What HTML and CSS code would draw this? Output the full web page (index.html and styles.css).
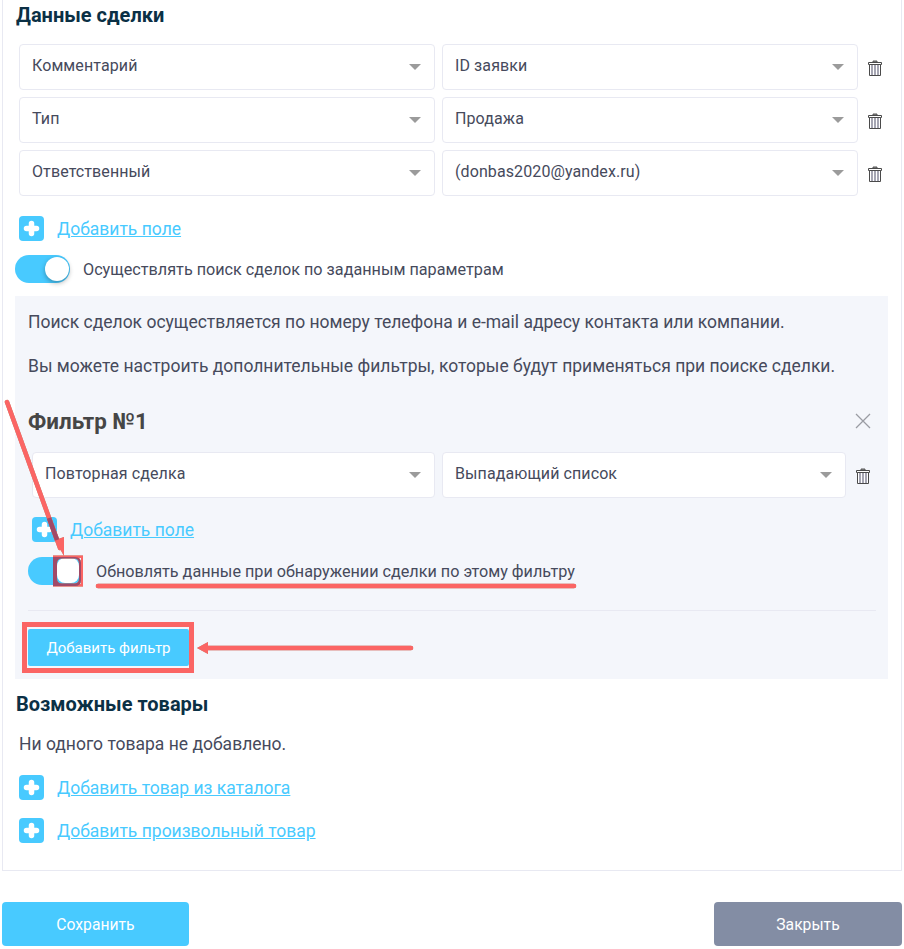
FILE: index.html
```html
<!DOCTYPE html>
<html lang="en">
<head>
    <meta charset="UTF-8">
    <meta name="viewport" content="width=device-width, initial-scale=1.0">
    <title>Данные сделки</title>
    <link rel="stylesheet" href="styles.css">
</head>
<body>
    <svg width="0" height="0" class="defs">
        <symbol id="trash" viewBox="0 0 14 16">
            <path d="M5 2.500V1h4v1.500" fill="#8a8a8a" stroke="#555" stroke-width="1"/>
            <path d="M.5 2.500h13v2H.5z" fill="#fff" stroke="#4a4a4a" stroke-width="1"/>
            <path d="M1.500 4.500h11v11h-11z" fill="#fff" stroke="#4a4a4a" stroke-width="1"/>
            <path d="M4 5v10M7 5v10M10 5v10" stroke="#6b6b80" stroke-width="1.200"/>
        </symbol>
        <symbol id="plus" viewBox="0 0 25 25">
            <rect width="25" height="25" rx="4" fill="#48caff"/>
            <path d="M12.500 7.500v10M7.500 12.500h10" stroke="#fff" stroke-width="5.500" stroke-linecap="round"/>
        </symbol>
    </svg>

    <div class="panel">
        <h2 class="section-title">Данные сделки</h2>

        <div class="field-row">
            <div class="select"><span>Комментарий</span><i class="caret"></i></div>
            <div class="select"><span>ID заявки</span><i class="caret"></i></div>
            <svg class="trash"><use href="#trash"/></svg>
        </div>
        <div class="field-row">
            <div class="select"><span>Тип</span><i class="caret"></i></div>
            <div class="select"><span>Продажа</span><i class="caret"></i></div>
            <svg class="trash"><use href="#trash"/></svg>
        </div>
        <div class="field-row">
            <div class="select"><span>Ответственный</span><i class="caret"></i></div>
            <div class="select"><span>(donbas2020@yandex.ru)</span><i class="caret"></i></div>
            <svg class="trash"><use href="#trash"/></svg>
        </div>

        <div class="add-line add-first">
            <svg class="plus"><use href="#plus"/></svg>
            <a href="#">Добавить поле</a>
        </div>

        <div class="switch-line">
            <span class="switch"><span class="knob"></span></span>
            <span class="switch-label">Осуществлять поиск сделок по заданным параметрам</span>
        </div>

        <div class="filter-box">
            <p class="note">Поиск сделок осуществляется по номеру телефона и e-mail адресу контакта или компании.</p>
            <p class="note">Вы можете настроить дополнительные фильтры, которые будут применяться при поиске сделки.</p>

            <div class="filter-head">
                <h3>Фильтр №1</h3>
                <svg class="close" viewBox="0 0 16 16"><path d="M1 1l14 14M15 1L1 15" stroke="#9a9ca3" stroke-width="1.300" fill="none"/></svg>
            </div>

            <div class="field-row filter-row">
                <div class="select"><span>Повторная сделка</span><i class="caret"></i></div>
                <div class="select"><span>Выпадающий список</span><i class="caret"></i></div>
                <svg class="trash"><use href="#trash"/></svg>
            </div>

            <div class="add-line filter-add">
                <svg class="plus"><use href="#plus"/></svg>
                <a href="#">Добавить поле</a>
            </div>

            <div class="switch-line filter-switch">
                <span class="switch"><span class="knob"></span></span>
                <span class="switch-label">Обновлять данные при обнаружении сделки по этому фильтру</span>
            </div>

            <div class="filter-foot">
                <button class="btn-add" type="button">Добавить фильтр</button>
            </div>
        </div>

        <h2 class="section-title goods-title">Возможные товары</h2>
        <p class="empty">Ни одного товара не добавлено.</p>

        <div class="add-line goods-add">
            <svg class="plus"><use href="#plus"/></svg>
            <a href="#">Добавить товар из каталога</a>
        </div>
        <div class="add-line goods-add">
            <svg class="plus"><use href="#plus"/></svg>
            <a href="#">Добавить произвольный товар</a>
        </div>
    </div>

    <div class="actions">
        <button class="btn btn-save" type="button">Сохранить</button>
        <button class="btn btn-close" type="button">Закрыть</button>
    </div>

    <!-- red marks drawn over the screenshot -->
    <svg class="marks" width="904" height="949" viewBox="0 0 904 949">
        <g fill="none" stroke="#fb6564">
            <path d="M7 402L60 548" stroke-width="4.500" stroke-linecap="round"/>
            <path d="M98 586H574" stroke-width="4.500" stroke-linecap="round"/>
            <rect x="24.500" y="624.500" width="167" height="46" stroke-width="5"/>
            <path d="M205 648H411" stroke-width="4.500" stroke-linecap="round"/>
        </g>
        <g fill="#fb6564">
            <path d="M64 556L55 540L64 537Z"/>
            <path d="M197 648L208 642V654Z"/>
            <!-- box round the knob, darker where it covers the blue toggle -->
            <path fill-rule="evenodd" d="M53 555.500h30v31h-30zM55 558v26h26v-26z"/>
            <path fill="#a04a68" fill-rule="evenodd" d="M53 557h22q6 0 6 6v17q0 6-6 6H53zM62 558.500q-5 0-5 5v15q0 5 5 5h12q5 0 5-5v-15q0-5-5-5z"/>
        </g>
        <path d="M49 518L57 540" fill="none" stroke="#a04a68" stroke-width="4.500"/>
    </svg>
</body>
</html>
```

FILE: styles.css
```css
* {
    margin: 0;
    padding: 0;
    box-sizing: border-box;
    font-family: Roboto, sans-serif;
}

body {
    position: relative;
    width: 904px;
    height: 949px;
    overflow: hidden;
    background: #fff;
    color: #464a5c;
    font-size: 16px;
}

.defs {
    position: absolute;
}

.panel {
    margin-left: 2px;
    width: 900px;
    height: 871px;
    padding: 0 13px 0 12px;
    border: 1px solid #e8e9f2;
    border-top: none;
}

.section-title {
    font-size: 20px;
    font-weight: 700;
    line-height: 21px;
    color: #0b3045;
    padding: 5px 0 0 1px;
}

/* Select rows */
.field-row {
    display: flex;
    align-items: center;
    gap: 7px;
    padding-left: 4px;
    margin-bottom: 7px;
}

.field-row:first-of-type {
    margin-top: 18px;
}

.select {
    flex: none;
    width: 416px;
    height: 46px;
    padding: 0 12px 3px;
    display: flex;
    align-items: center;
    justify-content: space-between;
    background: #fff;
    border: 1px solid #e8e9f2;
    border-radius: 4px;
    letter-spacing: 0.1px;
}

.caret {
    width: 0;
    height: 0;
    margin-top: 3px;
    margin-right: 1px;
    border-left: 6px solid transparent;
    border-right: 6px solid transparent;
    border-top: 6px solid #9b9b9b;
}

.trash {
    flex: none;
    width: 14px;
    height: 16px;
    margin-left: 3px;
    margin-top: 2px;
}

/* Add links */
.add-line {
    display: flex;
    align-items: center;
    gap: 13px;
    padding-left: 4px;
}

.add-line a {
    font-size: 17.500px;
    color: #48caff;
}

.plus {
    flex: none;
    width: 25px;
    height: 25px;
}

.add-first {
    margin-top: 20px;
}

/* Toggles */
.switch-line {
    display: flex;
    align-items: center;
    gap: 13px;
    margin-top: 14px;
}

.switch {
    position: relative;
    flex: none;
    display: block;
    width: 55px;
    height: 28px;
    background: #48caff;
    border-radius: 14px;
}

.knob {
    position: absolute;
    right: 1px;
    top: 2px;
    width: 24px;
    height: 24px;
    background: #fff;
    border-radius: 50%;
    box-shadow: 0 2px 5px rgba(0, 0, 0, 0.3);
}

.switch-label {
    font-size: 16.200px;
}

/* Filter block */
.filter-box {
    margin-top: 13px;
    height: 383px;
    padding: 16px 12px 0 13px;
    background: #f4f6fb;
}

.note {
    font-size: 17.500px;
    line-height: 20px;
    margin-bottom: 24px;
}

.filter-head {
    display: flex;
    align-items: center;
    justify-content: space-between;
    margin-top: 32px;
    padding-right: 5px;
}

.filter-head h3 {
    font-size: 22.400px;
    line-height: 26px;
    color: #464646;
}

.close {
    width: 16px;
    height: 16px;
}

.filter-row {
    margin-top: 18px;
    margin-bottom: 0;
}

.filter-row .select:first-child {
    width: 403px;
}

.filter-row .select:nth-child(2) {
    width: 404px;
}

.filter-add {
    margin-top: 19px;
}

.filter-switch {
    margin-top: 15px;
}

.filter-switch .knob {
    right: 4px;
    top: 1px;
    width: 22px;
    height: 25px;
    border-radius: 8px;
    box-shadow: none;
}

.filter-foot {
    margin-top: 25px;
    padding-top: 18px;
    border-top: 1px solid #e8e9f2;
}

.btn-add {
    display: block;
    width: 161px;
    height: 37px;
    border: none;
    background: #48caff;
    color: #fff;
    font-size: 15px;
    border-radius: 2px;
}

/* Goods */
.goods-title {
    margin-top: 9px;
    padding-top: 6px;
}

.empty {
    margin-top: 19px;
    margin-bottom: 21px;
    padding-left: 4px;
    font-size: 17.500px;
    line-height: 20px;
}

.goods-add {
    margin-top: 18px;
}

/* Bottom buttons */
.actions {
    display: flex;
    justify-content: space-between;
    margin: 31px 2px 0;
}

.btn {
    width: 187px;
    height: 44px;
    border: none;
    border-radius: 4px;
    color: #fff;
    font-size: 15.700px;
}

.btn-save {
    background: #48caff;
}

.btn-close {
    width: 188px;
    background: #838da4;
}

.marks {
    position: absolute;
    left: 0;
    top: 0;
    filter: drop-shadow(0 0 0.7px #a8937a);
}
```
